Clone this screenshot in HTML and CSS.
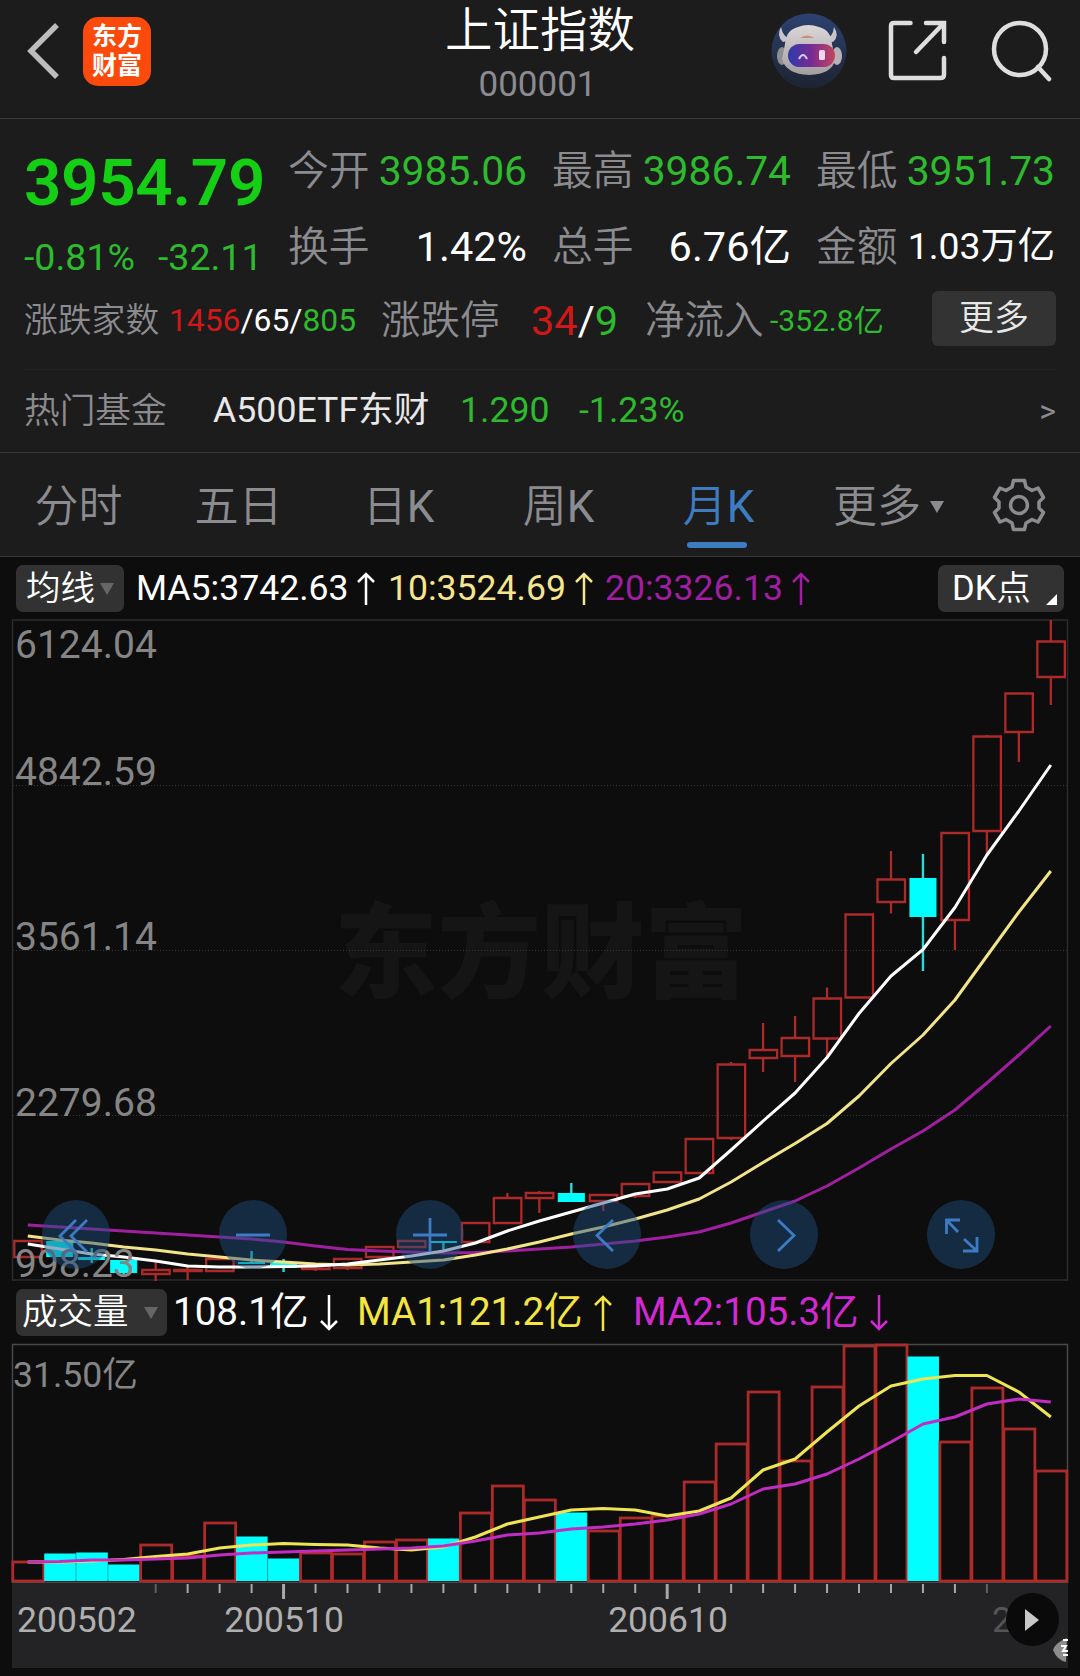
FILE: index.html
```html
<!DOCTYPE html>
<html lang="zh-CN">
<head>
    <meta charset="UTF-8">
    <meta name="viewport" content="width=device-width, initial-scale=1.0">
    <title>上证指数 000001</title>
    <link rel="stylesheet" href="styles.css">
</head>
<body>
    <header class="topbar">
        <div class="topbar-left">
            <svg class="back" width="36" height="60" viewBox="0 0 36 60"><path d="M33 4 L7 30 L33 56"/></svg>
            <div class="logo"><span>东方</span><span>财富</span></div>
        </div>
        <div class="title">
            <h1>上证指数</h1>
            <p>000001</p>
        </div>
        <div class="topbar-right">
            <svg width="76" height="76" viewBox="0 0 76 76">
                <defs>
                    <linearGradient id="sky" x1="0" y1="0" x2="0" y2="1"><stop offset="0" stop-color="#2c4270"/><stop offset="1" stop-color="#1d2330"/></linearGradient>
                    <linearGradient id="visor"><stop offset="0" stop-color="#2b3ba8"/><stop offset=".5" stop-color="#7a2b93"/><stop offset="1" stop-color="#c2455c"/></linearGradient>
                    <linearGradient id="shell" x1="0" y1="0" x2="0" y2="1"><stop offset="0" stop-color="#dcd8d8"/><stop offset="1" stop-color="#a19da1"/></linearGradient>
                </defs>
                <circle cx="38" cy="38" r="37.5" fill="url(#sky)"/>
                <path d="M10 14 Q5 23 12 29 L20 27 Q12 24 10 14 Z M63 14 Q69 23 62 29 L54 27 Q62 24 63 14 Z" fill="#c8c5c8"/>
                <ellipse cx="11" cy="43" rx="5" ry="9" fill="#908d93"/>
                <ellipse cx="66" cy="43" rx="5" ry="9" fill="#b8b2b6"/>
                <path d="M14 31 Q15 17 27 14 Q37 10 48 14 Q60 17 61 31 L64 46 Q62 61 38 62 Q15 61 11 46 Z" fill="url(#shell)"/>
                <path d="M29 25 Q36 20 43 25 Z" fill="#cc8d72"/>
                <rect x="17" y="31" width="47" height="23" rx="11.5" fill="url(#visor)"/>
                <path d="M28 46 Q32 38 36 46" fill="none" stroke="#d9c8f0" stroke-width="2"/>
                <rect x="48" y="37" width="6" height="10" rx="1.5" fill="#f0d6e6"/>
            </svg>
            <svg class="line-icon" width="60" height="62" viewBox="0 0 60 62"><path d="M22.5 3 H6 Q3 3 3 6 V55 Q3 58 6 58 H52 Q56 58 56 55 V38 M38 3 H56 V22 M55 4 L28 32"/></svg>
            <svg class="line-icon" width="62" height="62" viewBox="0 0 62 62"><circle cx="29" cy="29" r="26"/><path d="M47 47 L58 59"/></svg>
        </div>
    </header>

    <section class="quote">
        <div class="quote-main">
            <div class="price">
                <div class="last">3954.79</div>
                <div class="change"><span>-0.81%</span><span>-32.11</span></div>
            </div>
            <div class="stats">
                <div class="stat"><label>今开</label><span class="down">3985.06</span></div>
                <div class="stat"><label>最高</label><span class="down">3986.74</span></div>
                <div class="stat"><label>最低</label><span class="down">3951.73</span></div>
                <div class="stat"><label>换手</label><span class="wide">1.42%</span></div>
                <div class="stat"><label>总手</label><span class="wide">6.76亿</span></div>
                <div class="stat"><label>金额</label><span class="long">1.03万亿</span></div>
            </div>
        </div>
        <div class="breadth">
            <label class="label-count">涨跌家数</label>
            <div class="count"><span class="up">1456</span>/65/<span class="down">805</span></div>
            <label class="label-limit">涨跌停</label>
            <div class="limit"><span class="up">34</span>/<span class="down">9</span></div>
            <label class="label-flow">净流入</label>
            <div class="flow down">-352.8亿</div>
            <button class="more">更多</button>
        </div>
        <div class="fund">
            <label>热门基金</label>
            <span class="fund-name">A500ETF东财</span>
            <span class="fund-price down">1.290</span>
            <span class="down">-1.23%</span>
            <span class="fund-go">&gt;</span>
        </div>
    </section>

    <nav class="tabs">
        <a>分时</a>
        <a>五日</a>
        <a>日<b>K</b></a>
        <a>周<b>K</b></a>
        <a class="active">月<b>K</b></a>
        <a class="tab-more">更多<i class="caret"></i></a>
        <svg class="gear" width="54" height="54" viewBox="0 0 54 54">
            <path d="M21.5 2.5 H32.500 L34 9 L40 12.500 L46 10 L51.500 19.500 L47 24 V30 L51.500 34.500 L46 44 L40 41.500 L34 45 L32.500 51.500 H21.500 L20 45 L14 41.500 L8 44 L2.500 34.500 L7 30 V24 L2.500 19.500 L8 10 L14 12.500 L20 9 Z"/>
            <circle cx="27" cy="27" r="8.500"/>
        </svg>
    </nav>

    <main class="charts">
        <div class="legend">
            <button class="pill pill-ma">均线<i class="caret"></i></button>
            <span class="ma5">MA5:3742.63</span><svg class="arrow white" width="18" height="34" viewBox="0 0 18 34"><path d="M9 33 V2 M1 10 L9 2 L17 10"/></svg>
            <span class="ma10">10:3524.69</span><svg class="arrow pale" width="18" height="34" viewBox="0 0 18 34"><path d="M9 33 V2 M1 10 L9 2 L17 10"/></svg>
            <span class="ma20">20:3326.13</span><svg class="arrow purple" width="18" height="34" viewBox="0 0 18 34"><path d="M9 33 V2 M1 10 L9 2 L17 10"/></svg>
            <button class="pill pill-dk"><b>DK</b>点<i class="corner"></i></button>
        </div>

        <div class="kline">
            <svg id="kline" width="1080" height="660" viewBox="0 620 1080 660"></svg>
            <div class="controls">
                <button><svg viewBox="0 0 68 68"><path d="M34 19 L18 35 L34 51 M45 19 L29 35 L45 51"/></svg></button>
                <button><svg viewBox="0 0 68 68"><path d="M17 34 H51"/></svg></button>
                <button><svg viewBox="0 0 68 68"><path d="M17 34 H51 M34 17 V51"/></svg></button>
                <button><svg viewBox="0 0 68 68"><path d="M40 19 L24 34.500 L40 50"/></svg></button>
                <button><svg viewBox="0 0 68 68"><path d="M28 19 L44 34.500 L28 50"/></svg></button>
                <button><svg viewBox="0 0 68 68"><path d="M33 19 H19.500 V33 M19.500 19 L31 31 M50 36 V50 H36 M50 50 L37 38"/></svg></button>
            </div>
        </div>

        <div class="legend legend-vol">
            <button class="pill pill-vol">成交量<i class="caret"></i></button>
            <span class="vol">108.1亿</span><svg class="arrow white" width="18" height="36" viewBox="0 0 18 36"><path d="M9 0 V34 M1 26 L9 34 L17 26"/></svg>
            <span class="vol-ma1">MA1:121.2亿</span><svg class="arrow yellow" width="18" height="36" viewBox="0 0 18 36"><path d="M9 36 V2 M1 10 L9 2 L17 10"/></svg>
            <span class="vol-ma2">MA2:105.3亿</span><svg class="arrow magenta" width="18" height="36" viewBox="0 0 18 36"><path d="M9 0 V34 M1 26 L9 34 L17 26"/></svg>
        </div>

        <svg id="volume" width="1080" height="324" viewBox="0 1344 1080 324"></svg>
    </main>

    <script src="chart.js"></script>
</body>
</html>
```

FILE: styles.css
```css
* {
    box-sizing: border-box;
}
body {
    margin: 0;
    width: 1080px;
    height: 1676px;
    overflow: hidden;
    background-color: #0d0d0d;
    color: #fff;
    font-family: Roboto, "Noto Sans CJK SC", sans-serif;
    line-height: 1;
}
h1, p, b {
    margin: 0;
    font-weight: 400;
}
svg {
    display: block;
    flex: none;
}
button {
    border: 0;
    padding: 0;
    color: #fff;
    font-family: inherit;
    line-height: 1;
}
label {
    padding-top: 1px;
    color: #8b8b90;
    font-weight: 350;
}
span, label, a {
    white-space: nowrap;
}
.up {
    color: #d01818;
}
.down {
    color: #2dbb2d;
}

/* top bar */
.topbar {
    display: grid;
    grid-template-columns: 1fr auto 1fr;
    height: 119px;
    background-color: #1c1c1c;
    border-bottom: 1px solid #383838;
}
.topbar-left {
    display: flex;
    align-items: center;
    gap: 23px;
    height: 102px;
    padding-left: 24px;
}
.back path {
    fill: none;
    stroke: #bdbdbd;
    stroke-width: 5.500;
}
.logo {
    display: flex;
    flex-direction: column;
    align-items: center;
    justify-content: center;
    gap: 4px;
    width: 68px;
    height: 69px;
    border-radius: 15px;
    background-color: #fb4a0b;
    font-size: 25px;
    font-weight: 700;
}
.title {
    text-align: center;
}
.title h1 {
    padding-top: 3px;
    font-size: 47.500px;
    font-weight: 350;
    line-height: 56px;
}
.title p {
    margin-top: 7px;
    margin-left: -5px;
    color: #8b8b90;
    font-size: 35px;
    line-height: 38px;
}
.topbar-right {
    display: flex;
    justify-content: flex-end;
    align-items: center;
    height: 102px;
    gap: 41px;
    padding-right: 27px;
}
.line-icon {
    fill: none;
    stroke: #dedede;
    stroke-width: 4.500;
    stroke-linecap: round;
}
.topbar-right .line-icon:last-child {
    margin-left: 2px;
}

/* quote */
.quote {
    height: 334px;
    background-color: #1c1c1c;
    border-bottom: 1px solid #383838;
    padding: 0 24px 0 24px;
}
.quote-main {
    display: flex;
    height: 171px;
}
.price {
    width: 264px;
}
.last {
    padding-top: 31px;
    color: #14cf14;
    font-size: 65.500px;
    font-weight: 600;
    line-height: 66px;
    letter-spacing: -0.300px;
}
.change {
    display: flex;
    gap: 23px;
    margin-top: 22px;
    color: #2dbb2d;
    font-size: 37.500px;
    line-height: 38px;
}
.stats {
    display: grid;
    grid-template-columns: repeat(3, 239px);
    grid-template-rows: 76px 76px;
    column-gap: 25px;
    padding-top: 14px;
}
.stat {
    display: flex;
    justify-content: space-between;
    align-items: center;
    font-size: 40.800px;
}
.stat .wide {
    font-size: 41.500px;
}
.stat .long {
    font-size: 37.300px;
}
.breadth {
    display: flex;
    align-items: center;
    height: 61px;
}
.label-count {
    width: 145px;
    font-size: 33.800px;
}
.count {
    width: 212px;
    font-size: 31.800px;
}
.label-limit {
    width: 150px;
    font-size: 39.500px;
}
.limit {
    width: 114px;
    font-size: 41.500px;
}
.label-flow {
    width: 125px;
    font-size: 39.500px;
}
.flow {
    font-size: 30px;
}
.more {
    width: 124px;
    height: 55px;
    margin-left: auto;
    margin-top: -5px;
    border-radius: 6px;
    background-color: #333;
    color: #e8e8e8;
    font-size: 35px;
    font-weight: 350;
}
.fund {
    display: flex;
    align-items: center;
    height: 83px;
    margin-top: 18px;
    border-top: 1px solid #222;
    font-size: 35.700px;
}
.fund label {
    width: 189px;
}
.fund-name {
    width: 247px;
    color: #e8e8e8;
}
.fund-price {
    width: 119px;
}
.fund-go {
    margin-left: auto;
    color: #8b8b90;
    font-size: 32px;
}

/* period tabs */
.tabs {
    display: flex;
    align-items: center;
    height: 104px;
    background-color: #1c1c1c;
    border-bottom: 1px solid #383838;
    color: #8b8b90;
    font-size: 44px;
}
.tabs a {
    position: relative;
    width: 160px;
    padding-top: 4px;
    padding-right: 3px;
    text-align: center;
    font-weight: 350;
}
.tabs .active {
    color: #3e7cc2;
}
.tabs .active::after {
    content: "";
    position: absolute;
    left: 47px;
    bottom: -19px;
    width: 60px;
    height: 6px;
    border-radius: 3px;
    background-color: #3e7cc2;
}
.tabs .tab-more {
    display: flex;
    align-items: center;
    gap: 9px;
    width: 159px;
    margin-left: 33px;
}
.caret {
    border: 7px solid transparent;
    border-top: 12px solid #8b8b90;
    border-bottom: 0;
}
.gear {
    fill: none;
    stroke: #8b8b90;
    stroke-width: 3.500;
    stroke-linejoin: round;
}

/* legends above each chart */
.legend {
    display: flex;
    align-items: center;
    height: 63px;
    padding-left: 16px;
    font-size: 35.600px;
}
.legend .caret {
    border-top-color: #666;
}
.pill {
    display: flex;
    align-items: center;
    height: 47px;
    border-radius: 7px;
    background-color: #323232;
    font-size: 34.500px;
    font-weight: 350;
}
.pill-ma {
    width: 108px;
    padding-left: 10px;
    gap: 5px;
    margin-right: 12px;
}
.pill-vol {
    width: 151px;
    padding-left: 6px;
    gap: 15px;
    margin-right: 6px;
    font-size: 35.500px;
}
.pill-dk {
    position: relative;
    width: 126px;
    padding-left: 14px;
    margin-left: auto;
    margin-right: 16px;
}
.corner {
    position: absolute;
    right: 7px;
    bottom: 7px;
    border-left: 11px solid transparent;
    border-bottom: 11px solid #fff;
}
.arrow {
    fill: none;
    stroke: currentColor;
    stroke-width: 2.500;
}
.ma5 {
    width: 221px;
}
.ma10, .ma20 {
    width: 187px;
}
.ma5 + .arrow {
    margin-right: 13px;
}
.ma10 + .arrow {
    margin-right: 12px;
}
.white {
    color: #fff;
}
.ma10, .pale {
    color: #f6e58d;
}
.ma20, .purple {
    color: #a01fa0;
}
.legend-vol {
    font-size: 38.600px;
}
.vol {
    width: 147px;
}
.vol + .arrow {
    margin-right: 19px;
}
.vol-ma1 {
    width: 237px;
}
.vol-ma1 + .arrow {
    margin-right: 21px;
}
.vol-ma2 {
    width: 237px;
}
.vol-ma1, .yellow {
    color: #f4e542;
}
.vol-ma2, .magenta {
    color: #d428d4;
}

/* k-line chart */
.kline {
    position: relative;
    height: 661px;
}
.controls {
    position: absolute;
    left: 42px;
    bottom: 12px;
    display: flex;
    gap: 109px;
}
.controls button {
    width: 68px;
    height: 69px;
    border-radius: 50%;
    background-color: rgba(32, 78, 128, 0.47);
}
.controls path {
    fill: none;
    stroke: #3c7cc4;
    stroke-width: 2.800;
}
#kline, #volume {
    overflow: visible;
}
.frame {
    fill: none;
    stroke: #2b2b2b;
    stroke-width: 1.500;
}
.frame-vol {
    stroke: #484848;
}
.grid {
    stroke: #363636;
    stroke-dasharray: 1 2;
}
.watermark {
    fill: #151515;
    font-size: 103.500px;
    font-weight: 900;
}
.rise {
    fill: none;
    stroke: #ac2a2a;
    stroke-width: 2.300;
}
.rise-vol {
    stroke-width: 2.800;
}
.fall {
    fill: #00ffff;
    stroke: #00ffff;
}
.wick-fall {
    stroke: #2cdada;
    stroke-width: 2.400;
}
.line {
    fill: none;
    stroke-width: 3;
    stroke-linejoin: round;
}
.line-white {
    stroke: #fff;
}
.line-pale {
    stroke: #f2e488;
}
.line-purple {
    stroke: #a01fa0;
}
.line-yellow {
    stroke: #eee454;
}
.line-magenta {
    stroke: #c22cc2;
}
.scale {
    fill: #858585;
    font-size: 39px;
}
.scale-vol {
    font-size: 35.600px;
}
.axis {
    fill: #232325;
}
.tick {
    stroke: #a8a8a8;
    stroke-width: 2;
}
.tick-major {
    stroke-width: 3;
}
.tick-dim {
    opacity: 0.45;
}
.date {
    fill: #b0b0b0;
    font-size: 35.500px;
}
.date-dim {
    fill: #555;
}
```

FILE: chart.js
```js
const STEP = 31.97;
const FIRST = 27.8;
const cx = i => FIRST + STEP * i;

// [body top, body bottom, wick top, wick bottom, falling]
const candles = [
    [1241, 1257, 1241, 1257], [1241, 1257, 1241, 1257, 1], [1257, 1260, 1248, 1263, 1],
    [1260, 1273, 1260, 1276, 1], [1270, 1274, 1260, 1281], [1270, 1271, 1267, 1280],
    [1259, 1271, 1259, 1271], [1262, 1264, 1251, 1264, 1], [1262, 1268, 1259, 1272, 1],
    [1266, 1269, 1265, 1271], [1259, 1268, 1259, 1270], [1247, 1257, 1247, 1257],
    [1241, 1247, 1241, 1247], [1241, 1243, 1241, 1251, 1], [1223, 1242, 1223, 1242],
    [1198, 1223, 1193, 1223], [1193, 1198, 1191, 1213], [1193, 1202, 1183, 1202, 1],
    [1195, 1201, 1195, 1211], [1184, 1196, 1184, 1198], [1172.5, 1182, 1172.5, 1182],
    [1139, 1173, 1139, 1173], [1064.5, 1138, 1062, 1140], [1050, 1058, 1023, 1072],
    [1038, 1056, 1016, 1082], [998.5, 1038.5, 987.5, 1056], [914.5, 997.5, 914.5, 997.5],
    [879.5, 902, 851, 913.5], [878, 917, 854, 971, 1], [833, 920, 833, 950],
    [736.5, 831, 735, 855], [693.5, 732, 693.5, 762], [641.5, 677, 620, 705]
];
const ma5 = [1244, 1249, 1254, 1257, 1261, 1266, 1267, 1267, 1266.5, 1266, 1264, 1260, 1256, 1251, 1243, 1231, 1221, 1212, 1203, 1194, 1189, 1178, 1150, 1121, 1093, 1057.5, 1013.5, 976, 949.5, 907.5, 855, 811, 765];
const ma10 = [1236, 1240, 1243, 1247, 1250, 1254, 1257, 1260, 1262, 1264, 1265, 1264, 1262, 1260, 1255, 1249, 1242, 1234, 1227, 1219, 1210, 1199, 1182, 1162.5, 1143.5, 1123.5, 1096, 1063.5, 1035, 1000, 956, 912, 871];
const ma20 = [1225, 1227, 1229, 1231, 1233, 1235, 1237, 1239, 1242, 1246, 1249.5, 1251, 1252, 1253, 1252.5, 1251, 1249, 1247, 1244, 1241, 1237, 1232, 1223, 1212, 1201, 1186, 1168, 1149, 1131, 1110, 1083, 1055, 1026];

const volumes = [1562, 1554, 1553, 1565, 1545, 1556, 1523, 1537, 1559, 1553, 1554, 1542, 1540, 1539, 1513, 1486, 1500, 1513, 1531, 1518, 1516, 1482, 1444, 1392, 1461, 1387, 1346, 1345, 1357, 1442, 1388, 1429, 1471];
const volFall = [1, 2, 3, 7, 8, 13, 17, 28];
const volMa1 = [1562, 1562, 1561, 1559.5, 1556.5, 1554, 1548, 1545, 1543.5, 1544.5, 1545, 1548, 1550, 1547, 1537, 1524, 1517, 1510, 1508.5, 1510, 1516, 1511, 1498, 1470, 1459, 1432, 1406, 1386, 1379, 1375.5, 1375.5, 1392, 1417];
const volMa2 = [1562, 1561.5, 1560, 1560, 1559, 1558, 1555, 1553, 1552, 1551, 1550, 1549, 1548, 1546, 1541, 1535, 1533, 1529, 1527, 1524, 1520, 1514, 1504, 1489, 1484, 1474, 1459, 1442, 1424, 1417, 1404, 1399, 1402];

function polyline(values, name) {
    const points = values.map((y, i) => `${cx(i).toFixed(1)},${y}`).join(' ');
    return `<polyline class="line ${name}" points="${points}"/>`;
}

function text(x, y, name, value, anchor) {
    return `<text x="${x}" y="${y}" class="${name}" text-anchor="${anchor || 'start'}">${value}</text>`;
}

function drawKline() {
    let out = '<rect class="frame" x="12.5" y="620" width="1055" height="660"/>';
    out += text(541, 990, 'watermark', '东方财富', 'middle');
    [785.5, 950.5, 1115.5].forEach(y => {
        out += `<line class="grid" x1="13" x2="1067" y1="${y}" y2="${y}"/>`;
    });
    candles.forEach(([top, bottom, high, low, fall], i) => {
        const x = cx(i);
        if (fall) {
            out += `<path class="wick-fall" d="M${x} ${high}V${low}"/>`;
            out += `<rect class="fall" x="${x - 13}" y="${top + 0.5}" width="26" height="${bottom - top - 1}"/>`;
        } else {
            out += `<path class="rise" d="M${x} ${high}V${top}M${x} ${bottom}V${low}M${x - 13.5} ${top}h27.500V${bottom}h-27.500Z"/>`;
        }
    });
    out += polyline(ma20, 'line-purple') + polyline(ma10, 'line-pale') + polyline(ma5, 'line-white');
    out += text(15, 658, 'scale', '6124.04') + text(15, 785, 'scale', '4842.59');
    out += text(15, 950, 'scale', '3561.14') + text(15, 1116, 'scale', '2279.68') + text(15, 1277, 'scale', '998.23');
    document.getElementById('kline').innerHTML = out;
}

function drawVolume() {
    let out = '<rect class="frame frame-vol" x="12.5" y="1344.5" width="1055" height="238"/>';
    out += '<rect class="axis" x="12" y="1583" width="1056" height="85"/>';
    volumes.forEach((y, i) => {
        const x = cx(i);
        if (volFall.includes(i)) {
            out += `<rect class="fall" x="${x - 15}" y="${y}" width="30.500" height="${1580.5 - y}"/>`;
        } else {
            out += `<rect class="rise rise-vol" x="${x - 15}" y="${y}" width="31" height="${1581 - y}"/>`;
        }
    });
    out += polyline(volMa1, 'line-yellow') + polyline(volMa2, 'line-magenta');
    out += text(13, 1387, 'scale scale-vol', '31.50亿');
    for (let i = 4; i <= 30; i++) {
        const major = i === 8 || i === 20;
        const dim = i === 4 || i === 30;
        out += `<path class="tick ${major ? 'tick-major' : ''} ${dim ? 'tick-dim' : ''}" d="M${cx(i)} 1584v${major ? 15 : 9}"/>`;
    }
    out += text(17, 1632, 'date', '200502') + text(284, 1632, 'date', '200510', 'middle') + text(668, 1632, 'date', '200610', 'middle');
    out += text(992, 1632, 'date date-dim', '2');
    // next page button
    out += '<circle cx="1032.5" cy="1619.5" r="26.5" fill="#0a0a0a"/><path d="M1025 1609l14 11-14 11z" fill="#c8c8c8"/>';
    out += '<path d="M1067 1638q-12 5-14 12 4 10 13 12z" fill="#8d8d8d"/><path d="M1063 1640h5M1061 1646h5l-3 5h5M1063 1655h5" stroke="#fff" stroke-width="2" fill="none"/>';
    document.getElementById('volume').innerHTML = out;
}

drawKline();
drawVolume();
```
